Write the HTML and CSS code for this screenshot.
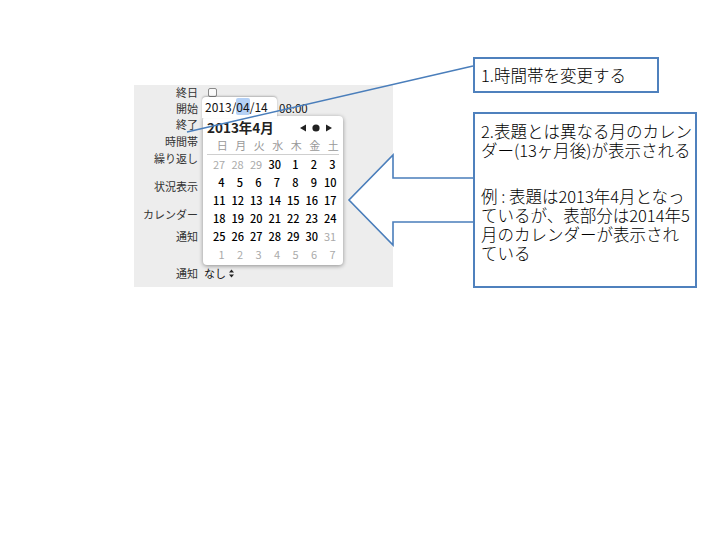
FILE: index.html
```html
<!DOCTYPE html>
<html lang="ja">
<head>
<meta charset="utf-8">
<title>カレンダー表示</title>
<link rel="stylesheet" href="styles.css">
</head>
<body>
<div class="stage">
  <div class="panel">
    <div class="form">
      <div class="lbl">終日</div><div class="val"><span class="check"></span></div>
      <div class="lbl">開始</div><div class="val"><span class="time">08:00</span></div>
      <div class="lbl">終了</div><div class="val"></div>
      <div class="lbl">時間帯</div><div class="val"></div>
      <div class="lbl">繰り返し</div><div class="val"></div>
      <div class="lbl">状況表示</div><div class="val"></div>
      <div class="lbl">カレンダー</div><div class="val"></div>
      <div class="lbl">通知</div><div class="val"></div>
      <div class="lbl">通知</div>
      <div class="val"><span class="select">なし<svg class="stepper" width="5" height="9" viewBox="0 0 5 9"><path d="M0 3.5 L2.5 0.5 L5 3.5 Z M0 5.5 L2.5 8.5 L5 5.5 Z" fill="#222"/></svg></span></div>
    </div>
  </div>

  <div class="popup-tab">2013/<span class="sel">04</span>/14</div>
  <div class="calendar">
    <div class="cal-head">
      <span class="cal-title">2013年4月</span>
      <svg class="cal-nav" width="36" height="10" viewBox="0 0 36 10">
        <path d="M0 5 L6 1.5 L6 8.5 Z" fill="#222"/>
        <circle cx="16" cy="5" r="3.6" fill="#222"/>
        <path d="M32 5 L26 1.5 L26 8.5 Z" fill="#222"/>
      </svg>
    </div>
    <div class="cal-week">
      <span>日</span><span>月</span><span>火</span><span>水</span><span>木</span><span>金</span><span>土</span>
    </div>
    <div class="cal-days">
      <span class="dim">27</span><span class="dim">28</span><span class="dim">29</span><span>30</span><span>1</span><span>2</span><span>3</span>
      <span>4</span><span>5</span><span>6</span><span>7</span><span>8</span><span>9</span><span>10</span>
      <span>11</span><span>12</span><span>13</span><span>14</span><span>15</span><span>16</span><span>17</span>
      <span>18</span><span>19</span><span>20</span><span>21</span><span>22</span><span>23</span><span>24</span>
      <span>25</span><span>26</span><span>27</span><span>28</span><span>29</span><span>30</span><span class="dim">31</span>
      <span class="dim">1</span><span class="dim">2</span><span class="dim">3</span><span class="dim">4</span><span class="dim">5</span><span class="dim">6</span><span class="dim">7</span>
    </div>
  </div>

  <svg class="overlay" width="720" height="540" viewBox="0 0 720 540">
    <line x1="187" y1="132" x2="473" y2="66" stroke="#4a7ebb" stroke-width="1.5"/>
    <polygon points="475,178 393,178 393,155 349,200 393,245 393,222 475,222" fill="#fff"/>
    <polyline points="475,178 393,178 393,155 349,200 393,245 393,222 475,222" fill="none" stroke="#4a7ebb" stroke-width="1.6"/>
  </svg>

  <div class="note note1">1.時間帯を変更する</div>
  <div class="note note2">
    <p>2.表題とは異なる月のカレン<br>ダー(13ヶ月後)が表示される</p>
    <p class="p2">例 : 表題は2013年4月となっ<br>ているが、表部分は2014年5<br>月のカレンダーが表示され<br>ている</p>
  </div>
</div>
</body>
</html>
```

FILE: styles.css
```css
html, body {
  margin: 0;
  padding: 0;
  background: #fff;
}

body {
  font-family: "Noto Sans CJK JP", "Noto Sans", sans-serif;
}

.stage {
  position: relative;
  width: 720px;
  height: 540px;
  overflow: hidden;
}

/* screenshot panel placed on the slide */
.panel {
  position: absolute;
  left: 134px;
  top: 85px;
  width: 259px;
  height: 202px;
  background: #ededed;
}

.form {
  display: grid;
  grid-template-columns: 64px 1fr;
  grid-template-rows: 16px 16px 17px 17px 28px 28px 22px 37px 14px;
  column-gap: 6px;
  font-size: 11px;
  line-height: 14px;
  color: #333;
}

.lbl {
  text-align: right;
  white-space: nowrap;
}

.val {
  display: flex;
  align-items: center;
  height: 14px;
  white-space: nowrap;
  color: #111;
}

.check {
  display: inline-block;
  width: 7px;
  height: 7px;
  margin-left: 4px;
  border: 1px solid #8a8a8a;
  border-radius: 2px;
  background: #fafafa;
}

.time {
  padding-left: 75px;
  font-size: 11.5px;
}

.select {
  display: inline-flex;
  align-items: center;
  gap: 3px;
  font-size: 11px;
}

/* popup date field + calendar */
.popup-tab {
  position: absolute;
  left: 202px;
  top: 97px;
  width: 72px;
  height: 21px;
  padding-left: 3px;
  background: #fff;
  border-radius: 4px 4px 0 0;
  box-shadow: 0 -1px 2px rgba(0, 0, 0, 0.25);
  font-size: 12px;
  line-height: 20px;
  color: #111;
  z-index: 2;
  white-space: nowrap;
}

.sel {
  background: #b5d1f6;
  border-radius: 2px;
}

.calendar {
  position: absolute;
  left: 203px;
  top: 116px;
  width: 140px;
  height: 149px;
  background: #fff;
  border-radius: 4px;
  box-shadow: 0 1px 4px rgba(0, 0, 0, 0.4);
  z-index: 1;
}

.cal-head {
  display: flex;
  justify-content: space-between;
  align-items: center;
  height: 17px;
  margin-top: 3px;
  padding: 0 7px 0 4px;
}

.cal-title {
  font-size: 13.5px;
  font-weight: bold;
  color: #222;
  line-height: 17px;
}

.cal-nav {
  display: block;
  margin-top: 1px;
}

.cal-week,
.cal-days {
  display: grid;
  grid-template-columns: repeat(7, 18.5px);
  margin: 0 4px;
  padding-left: 6px;
  font-size: 11px;
}

.cal-week {
  grid-auto-rows: 18px;
  line-height: 18px;
  border-bottom: 1px solid #cfcfcf;
  color: #999;
  text-align: center;
}

.cal-days {
  grid-auto-rows: 18px;
  line-height: 18px;
  color: #000;
  font-weight: 500;
}

.cal-days span {
  text-align: right;
  padding-right: 7px;
}

.cal-days .dim {
  color: #aaa;
  font-weight: normal;
}

/* slide annotations */
.overlay {
  position: absolute;
  left: 0;
  top: 0;
  z-index: 3;
}

.note {
  position: absolute;
  box-sizing: border-box;
  background: #fff;
  border: 2px solid #4f81bd;
  color: #000;
  z-index: 4;
  white-space: nowrap;
  font-weight: 300;
}

.note1 {
  left: 473px;
  top: 57px;
  width: 186px;
  height: 36px;
  padding-left: 6px;
  font-size: 16.5px;
  line-height: 32px;
}

.note2 {
  left: 473px;
  top: 112px;
  width: 224px;
  height: 176px;
  padding: 8px 0 0 6px;
  font-size: 16.5px;
  line-height: 18.7px;
}

.note2 p {
  margin: 0;
}

.note2 .p2 {
  margin-top: 28px;
}
```
